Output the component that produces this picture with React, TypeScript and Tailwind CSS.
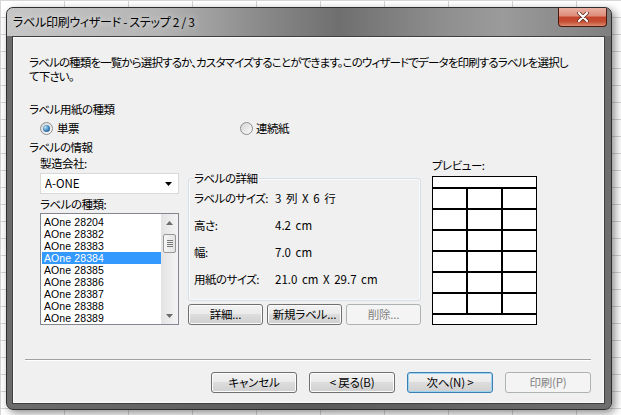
import React from 'react';

const labelTypes = [
  'AOne 28204',
  'AOne 28382',
  'AOne 28383',
  'AOne 28384',
  'AOne 28385',
  'AOne 28386',
  'AOne 28387',
  'AOne 28388',
  'AOne 28389',
];

const details = [
  { label: 'ラベルのサイズ:', value: '3 列 X 6 行' },
  { label: '高さ:', value: '4.2 cm' },
  { label: '幅:', value: '7.0 cm' },
  { label: '用紙のサイズ:', value: '21.0 cm X 29.7 cm' },
];

const btn =
  'h-[21px] rounded-[3px] border border-[#707070] bg-[linear-gradient(#f2f2f2_0%,#ebebeb_45%,#dddddd_50%,#cfcfcf_100%)] shadow-[inset_0_0_0_1px_#fbfbfb] leading-[13px] tracking-[-0.2px] text-black flex items-center justify-center whitespace-pre';
const btnDefault =
  'h-[21px] rounded-[3px] border border-[#3c7fb1] bg-[linear-gradient(#f2f2f2_0%,#ebebeb_45%,#dddddd_50%,#cfcfcf_100%)] shadow-[inset_0_0_0_1px_#9fd3f2] leading-[13px] tracking-[-0.2px] text-black flex items-center justify-center whitespace-pre';
const btnDisabled =
  'h-[21px] rounded-[3px] border border-[#adb2b5] bg-[#f4f4f4] leading-[13px] tracking-[-0.2px] text-[#838383] flex items-center justify-center whitespace-pre';

const Radio = ({ checked }: { checked?: boolean }) => (
  <span className="w-[13px] h-[13px] rounded-full border border-[#8e8f8f] bg-[linear-gradient(135deg,#d4d4d4,#fbfbfb)] flex items-center justify-center shrink-0">
    {checked && (
      <span className="w-[7px] h-[7px] rounded-full bg-[radial-gradient(circle_at_35%_35%,#b6e2f7,#3a7fb6_55%,#174b78)]" />
    )}
  </span>
);

const ScrollBar = () => (
  <div className="w-[17px] h-full bg-[linear-gradient(90deg,#e3e3e3,#f4f4f4)] flex flex-col items-center">
    <div className="h-[17px] w-full flex items-center justify-center">
      <svg width="7" height="4" viewBox="0 0 7 4">
        <path d="M0 4 L3.5 0 L7 4 Z" fill="#6b6b6b" />
      </svg>
    </div>
    <div className="mt-[3px] w-[13px] h-[19px] rounded-[2px] border border-[#979797] bg-[linear-gradient(90deg,#f7f7f7,#e2e2e2)] flex flex-col items-center justify-center gap-[1px]">
      <span className="w-[6px] h-[1px] bg-[#7a7a7a]" />
      <span className="w-[6px] h-[1px] bg-[#7a7a7a]" />
      <span className="w-[6px] h-[1px] bg-[#7a7a7a]" />
      <span className="w-[6px] h-[1px] bg-[#7a7a7a]" />
    </div>
    <div className="flex-1" />
    <div className="h-[17px] w-full flex items-center justify-center">
      <svg width="7" height="4" viewBox="0 0 7 4">
        <path d="M0 0 L3.5 4 L7 0 Z" fill="#6b6b6b" />
      </svg>
    </div>
  </div>
);

const App = () => {
  return (
    <div className="w-[621px] h-[415px] overflow-hidden bg-white bg-[linear-gradient(#d6d6d6_1px,transparent_1px),linear-gradient(90deg,#d6d6d6_1px,transparent_1px)] [background-size:64px_17px] pt-[7px] pl-[6px] font-['Noto_Sans_CJK_JP',sans-serif] [font-feature-settings:'palt'] text-[11.5px] tracking-[-0.5px]">
      <div className="w-[606px] h-[403px] rounded-[7px] border border-[#2e2e2e] bg-[linear-gradient(90deg,#6c6c6c,#5a5a5a_50%,#6e6e6e)] shadow-[3px_3px_8px_rgba(0,0,0,0.45)] flex flex-col overflow-hidden">
        {/* title bar */}
        <div className="h-[28px] shrink-0 flex items-start justify-between pl-[6px] pr-[4px] bg-[linear-gradient(90deg,#c6c6c6_0%,#b4b4b4_25%,#8a8a8a_42%,#6f6f6f_55%,#8e8e8e_72%,#9b9b9b_82%,#7f7f7f_100%)]">
          <span className="mt-[6px] text-[12px] leading-[15px] tracking-[-0.3px] text-black whitespace-pre [text-shadow:0_0_6px_rgba(255,255,255,0.9)]">
            ラベル印刷ウィザード - ステップ 2 / 3
          </span>
          <div className="w-[49px] h-[19px] rounded-b-[4px] border border-t-0 border-[#4a1a10] bg-[linear-gradient(#eab0a2_0%,#dc8b78_45%,#c5442b_50%,#c44e33_75%,#dd8a70_100%)] flex items-center justify-center">
            <svg width="12" height="10" viewBox="0 0 12 10">
              <path d="M2 1 L10 9 M10 1 L2 9" stroke="#5a2418" strokeWidth="3.6" strokeLinecap="round" />
              <path d="M2 1 L10 9 M10 1 L2 9" stroke="#ffffff" strokeWidth="2.2" strokeLinecap="round" />
            </svg>
          </div>
        </div>

        {/* client area */}
        <div className="ml-[5px] mr-[6px] mb-[5px] flex-1 border border-[#3f3f3f] bg-[#f0f0f0] shadow-[inset_0_0_0_1px_#fafafa] flex flex-col leading-[13px] text-black">
          <p className="ml-[16px] mt-[18px] leading-[14px] whitespace-nowrap tracking-[-0.85px]">
            ラベルの種類を一覧から選択するか、カスタマイズすることができます。このウィザードでデータを印刷するラベルを選択し
            <br />
            て下さい。
          </p>

          <p className="ml-[16px] mt-[20px]">ラベル用紙の種類</p>

          <div className="ml-[27px] mt-[6px] h-[13px] flex items-center">
            <div className="w-[200px] flex items-center gap-[4px]">
              <Radio checked />
              <span>単票</span>
            </div>
            <div className="flex items-center gap-[3px]">
              <Radio />
              <span>連続紙</span>
            </div>
          </div>

          <p className="ml-[16px] mt-[6px]">ラベルの情報</p>

          <div className="ml-[27px] mt-[3px] flex items-start">
            {/* left column */}
            <div className="w-[139px] flex flex-col">
              <span className="h-[13px]">製造会社:</span>
              <div className="mt-[3px] h-[21px] border border-[#d9d9d9] bg-white flex items-center justify-between pl-[4px] pr-[6px]">
                <span className="tracking-[0px]">A-ONE</span>
                <svg width="7" height="4" viewBox="0 0 7 4">
                  <path d="M0 0 L3.5 4 L7 0 Z" fill="#000" />
                </svg>
              </div>
              <span className="mt-[4px] h-[13px]">ラベルの種類:</span>
              <div className="mt-[2px] h-[112px] border border-[#828790] bg-white flex overflow-hidden">
                <div className="flex-1 pt-[2px] pl-[1px] font-['Liberation_Sans',sans-serif]">
                  {labelTypes.map((t) => (
                    <div
                      key={t}
                      className={
                        t === 'AOne 28384'
                          ? 'h-[12px] leading-[12px] text-[10.5px] tracking-[0.1px] whitespace-pre pl-[2px] bg-[#3399ff] text-white'
                          : 'h-[12px] leading-[12px] text-[10.5px] tracking-[0.1px] whitespace-pre pl-[2px]'
                      }
                    >
                      {t}
                    </div>
                  ))}
                </div>
                <ScrollBar />
              </div>
            </div>

            {/* middle column */}
            <div className="ml-[9px] w-[233px] pt-[13px] flex flex-col">
              <fieldset className="w-[233px] h-[131px] rounded-[3px] border border-[#d5dfe5] pl-[4px] shadow-[inset_0_0_0_1px_#fafafa]">
                <legend className="px-[1px] leading-[16px]">ラベルの詳細</legend>
                <div className="mt-[6px] pl-[1px] flex flex-col gap-[14px]">
                  {details.map((d) => (
                    <div key={d.label} className="h-[13px] flex whitespace-nowrap">
                      <span className="w-[81px]">{d.label}</span>
                      <span className="tracking-[0px] whitespace-pre [word-spacing:2px]">{d.value}</span>
                    </div>
                  ))}
                </div>
              </fieldset>
              <div className="mt-[3px] flex gap-[4px]">
                <button className={`${btn} w-[75px]`}>詳細...</button>
                <button className={`${btn} w-[75px]`}>新規ラベル...</button>
                <button className={`${btnDisabled} w-[75px]`}>削除...</button>
              </div>
            </div>

            {/* preview */}
            <div className="ml-[11px] pt-[2px] flex flex-col">
              <span className="h-[13px]">プレビュー:</span>
              <div className="mt-[4px] w-[105px] h-[149px] border border-black bg-white flex flex-col">
                <div className="h-[10px]" />
                <div className="bg-black py-[2px] grid grid-cols-3 gap-[2px]">
                  {Array.from({ length: 18 }).map((_, i) => (
                    <div key={i} className="h-[19px] bg-white" />
                  ))}
                </div>
              </div>
            </div>
          </div>

          <div className="ml-[12px] mt-[34px] w-[566px] h-[2px] border-t border-[#a0a0a0] border-b border-b-white" />

          <div className="ml-[198px] mt-[11px] flex gap-[12px]">
            <button className={`${btn} w-[86px]`}>キャンセル</button>
            <button className={`${btn} w-[86px]`}>&lt; 戻る(B)</button>
            <button className={`${btnDefault} w-[86px]`}>次へ(N) &gt;</button>
            <button className={`${btnDisabled} w-[86px]`}>印刷(P)</button>
          </div>
        </div>
      </div>
    </div>
  );
};

export default App;
